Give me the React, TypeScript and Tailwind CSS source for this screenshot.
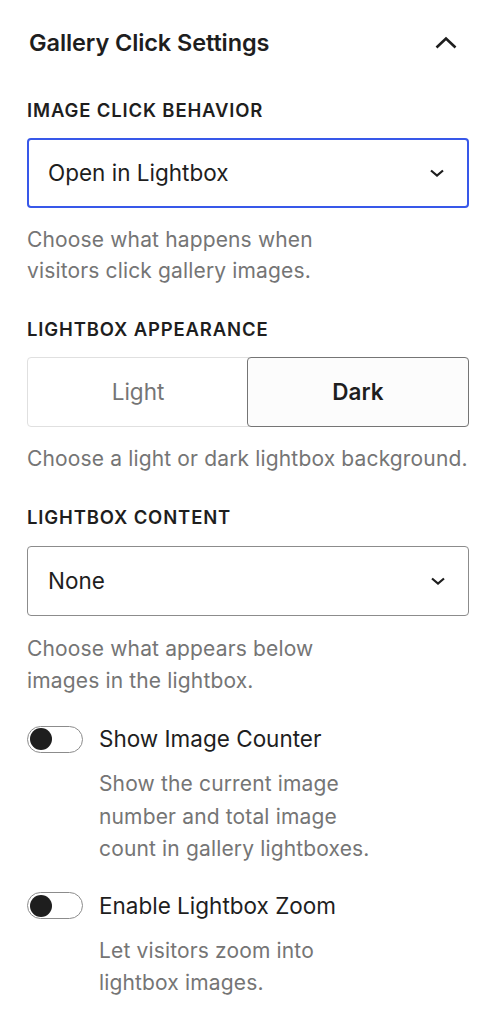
import React from "react";

const ChevronDown = () => (
  <svg width="16" height="10" viewBox="0 0 16 10" fill="none">
    <path d="M2 2.5 L8 7.5 L14 2.5" stroke="#1e1e1e" strokeWidth="2.2" />
  </svg>
);

const ChevronUp = () => (
  <svg width="22" height="14" viewBox="0 0 22 14" fill="none">
    <path d="M1.5 11.5 L11 2.5 L20.5 11.5" stroke="#1e1e1e" strokeWidth="2.6" />
  </svg>
);

const Toggle = () => (
  <div className="w-[56px] h-[27px] rounded-full border-[1.5px] border-[#8c8c8c] bg-white flex items-center pl-[1.5px] shrink-0">
    <div className="w-[22px] h-[22px] rounded-full bg-[#1e1e1e]" />
  </div>
);

export default function App() {
  return (
    <div
      className="w-[496px] h-[1024px] bg-white text-[#1e1e1e] overflow-hidden"
      style={{ fontFamily: "Inter, 'Noto Sans', sans-serif" }}
    >
      <div className="h-[86px] flex items-center justify-between pl-[29px] pr-[39px]">
        <div className="text-[23.5px] font-semibold tracking-[-0.1px]">Gallery Click Settings</div>
        <ChevronUp />
      </div>

      <div className="pl-[27px] pr-[27px]">
        <div className="mt-[14px] h-[20px] leading-[20px] text-[18.5px] font-semibold tracking-[0.85px] uppercase">
          Image Click Behavior
        </div>
        <div className="mt-[18px] h-[70px] rounded-[4px] border-2 border-[#3858e9] flex items-center justify-between pl-[19px] pr-[22px]">
          <span className="text-[22.5px]">Open in Lightbox</span>
          <ChevronDown />
        </div>
        <div className="mt-[16px] text-[21px] leading-[31px] text-[#757575] tracking-[0.15px] whitespace-nowrap">
          Choose what happens when
          <br />
          visitors click gallery images.
        </div>

        <div className="mt-[33px] h-[20px] leading-[20px] text-[18.5px] font-semibold tracking-[0.85px] uppercase">
          Lightbox Appearance
        </div>
        <div className="mt-[18px] h-[70px] flex rounded-[4px] border border-[#e0e0e0]">
          <div className="flex-1 flex items-center justify-center text-[22.5px] text-[#757575]">Light</div>
          <div className="flex-1 -m-px flex items-center justify-center text-[22.5px] font-semibold rounded-[4px] border-[1.5px] border-[#757575] bg-[#fcfcfc]">
            Dark
          </div>
        </div>
        <div className="mt-[16px] text-[21px] leading-[31px] text-[#757575] tracking-[0.15px] whitespace-nowrap">
          Choose a light or dark lightbox background.
        </div>

        <div className="mt-[33px] h-[20px] leading-[20px] text-[18.5px] font-semibold tracking-[0.85px] uppercase">
          Lightbox Content
        </div>
        <div className="mt-[19px] h-[70px] rounded-[4px] border-[1.5px] border-[#8c8c8c] flex items-center justify-between pl-[20px] pr-[22px]">
          <span className="text-[22.5px]">None</span>
          <ChevronDown />
        </div>
        <div className="mt-[17px] text-[21px] leading-[31.5px] text-[#757575] tracking-[0.15px] whitespace-nowrap">
          Choose what appears below
          <br />
          images in the lightbox.
        </div>

        <div className="mt-[29px] flex items-center gap-[16px] h-[28px]">
          <Toggle />
          <span className="text-[22.5px]">Show Image Counter</span>
        </div>
        <div className="mt-[15px] pl-[72px] text-[21px] leading-[32.5px] text-[#757575] tracking-[0.15px] whitespace-nowrap">
          Show the current image
          <br />
          number and total image
          <br />
          count in gallery lightboxes.
        </div>

        <div className="mt-[26px] flex items-center gap-[16px] h-[28px]">
          <Toggle />
          <span className="text-[22.5px]">Enable Lightbox Zoom</span>
        </div>
        <div className="mt-[15px] pl-[72px] text-[21px] leading-[32.5px] text-[#757575] tracking-[0.15px] whitespace-nowrap">
          Let visitors zoom into
          <br />
          lightbox images.
        </div>
      </div>
    </div>
  );
}
